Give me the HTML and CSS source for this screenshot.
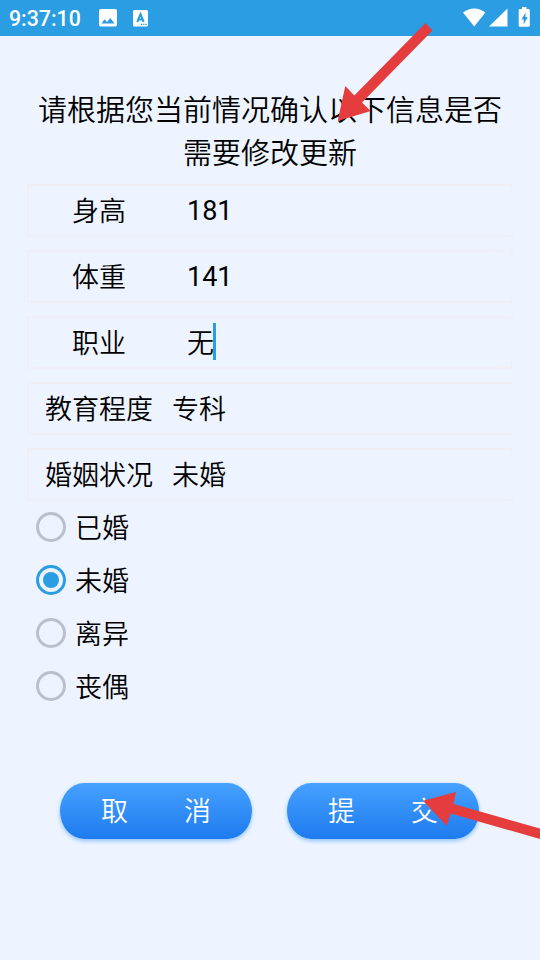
FILE: index.html
```html
<!DOCTYPE html>
<html lang="zh-CN">
  <head>
    <meta charset="utf-8">
    <title>信息确认</title>
    <link rel="stylesheet" href="styles.css">
  </head>
  <body>
    <div class="statusbar">
      <span class="clock">9:37:10</span>
      <svg class="pic" width="18" height="18" viewBox="0 0 18 18">
        <path fill="#fff" fill-rule="evenodd" d="M2 0h14a2 2 0 0 1 2 2v13.500a2 2 0 0 1-2 2H2a2 2 0 0 1-2-2V2a2 2 0 0 1 2-2zM2.500 14.500h13L11.300 9 8 13 5.500 10.300z"/>
      </svg>
      <svg class="lang" width="15" height="17" viewBox="0 0 15 17">
        <rect width="15" height="16.500" rx="1.500" fill="#fff"/>
        <path fill="none" stroke="#2a9de3" stroke-width="2" d="M4.300 12L7.500 4.200 10.700 12M5.300 9.500h4.400"/>
        <path fill="#2a9de3" d="M8 13.800h1.300v1.300H8zM10.200 13.800h1.300v1.300h-1.300zM12.400 13.800h1.300v1.300h-1.300z"/>
      </svg>
      <svg class="signals" width="68" height="20" viewBox="0 0 68 20">
        <path fill="#fff" d="M0 4.500Q11.200-3.500 22.400 4.500L11.200 18.500z"/>
        <path fill="#fff" d="M44.500 0.500v18H26z"/>
        <path fill="#fff" fill-rule="evenodd" d="M59-1h4.500v2h2a1.300 1.300 0 0 1 1.300 1.300v15.100a1.300 1.300 0 0 1-1.300 1.300h-8.500a1.300 1.300 0 0 1-1.300-1.300V2.300A1.300 1.300 0 0 1 57 1h2zM62.500 4.500l-4 7h2.200v5l4-7.500H62.500z"/>
      </svg>
    </div>
    <form class="page">
      <h1 class="title">请根据您当前情况确认以下信息是否<br>需要修改更新</h1>
      <div class="rows">
        <div class="row"><span class="label">身高</span><span class="value number">181</span></div>
        <div class="row"><span class="label">体重</span><span class="value number">141</span></div>
        <div class="row"><span class="label">职业</span><span class="value">无</span><span class="caret"></span></div>
        <div class="row"><span class="label">教育程度</span><span class="value picked">专科</span></div>
        <div class="row"><span class="label">婚姻状况</span><span class="value picked">未婚</span></div>
      </div>
      <div class="options">
        <label class="option"><input type="radio" name="marriage">已婚</label>
        <label class="option"><input type="radio" name="marriage" checked>未婚</label>
        <label class="option"><input type="radio" name="marriage">离异</label>
        <label class="option"><input type="radio" name="marriage">丧偶</label>
      </div>
      <div class="buttons">
        <button type="button" class="btn"><span>取</span><span>消</span></button>
        <button type="button" class="btn"><span>提</span><span>交</span></button>
      </div>
    </form>
    <svg class="arrows" width="540" height="960" viewBox="0 0 540 960">
      <path d="M337.700 121L345.300 86 354.300 95.500 425.500 23 432.500 30.500 362 102.500 370.700 111z"/>
      <path d="M423 800.700L456 792 453.500 804 540 828.500V839L450.700 813.500 446.700 825.700z"/>
    </svg>
  </body>
</html>
```

FILE: styles.css
```css
* {
  box-sizing: border-box;
}

body {
  margin: 0;
  height: 960px;
  overflow: hidden;
  position: relative;
  background: #edf4ff;
  color: #000;
  font-family: Roboto, "Noto Sans CJK SC DemiLight", "Noto Sans CJK SC", sans-serif;
  font-size: 27px;
  font-weight: 400;
}

.statusbar {
  display: flex;
  align-items: center;
  height: 36px;
  padding: 0 9px 0 9px;
  background: #2a9de3;
  color: #fff;
}
.clock {
  width: 90px;
  padding-top: 1px;
  font-size: 21.300px;
  font-weight: 500;
  line-height: 36px;
}
.lang {
  margin-left: 16px;
}
.signals {
  margin-left: auto;
  overflow: visible;
}

.page {
  padding: 54px 27px 0;
}
.title {
  margin: 0 -20px;
  text-align: center;
  font-size: 29px;
  font-weight: 400;
  line-height: 43px;
}

.rows {
  display: flex;
  flex-direction: column;
  gap: 13px;
  margin-top: 8px;
}
.row {
  display: flex;
  align-items: center;
  height: 53px;
  padding-left: 15px;
  border: 2px solid #f0eff6;
  line-height: 50px;
}
.label {
  width: 110px;
  padding-top: 2px;
  text-align: center;
}
.value {
  margin-left: 33px;
  padding-top: 2px;
}
.number {
  padding-top: 1px;
}
.picked {
  margin-left: 18px;
}
.caret {
  width: 3px;
  height: 37px;
  margin: -2px 0 0 -1px;
  background: #2a9de3;
}

.options {
  margin-top: -1px;
  padding-left: 9px;
}
.option {
  display: flex;
  align-items: center;
  gap: 9px;
  height: 53px;
}
.option input {
  appearance: none;
  display: grid;
  place-items: center;
  width: 30px;
  height: 30px;
  margin: 0;
  border: 3px solid #babfcc;
  border-radius: 50%;
}
.option input:checked {
  border-color: #2a9de3;
}
.option input:checked::before {
  content: "";
  width: 16px;
  height: 16px;
  border-radius: 50%;
  background: #2a9de3;
}

.buttons {
  display: flex;
  gap: 35px;
  margin-top: 71px;
  padding-left: 33px;
}
.btn {
  display: flex;
  justify-content: space-between;
  align-items: center;
  width: 192px;
  height: 56px;
  padding: 0 41px 4px;
  border: 0;
  border-radius: 24px / 28px;
  background: linear-gradient(#46a1ff, #1d7bee);
  box-shadow: 0 2px 4px #8fc0fa;
  color: #fff;
  font: inherit;
}

.arrows {
  position: absolute;
  left: 0;
  top: 0;
  fill: #e53c3d;
  pointer-events: none;
}
```
